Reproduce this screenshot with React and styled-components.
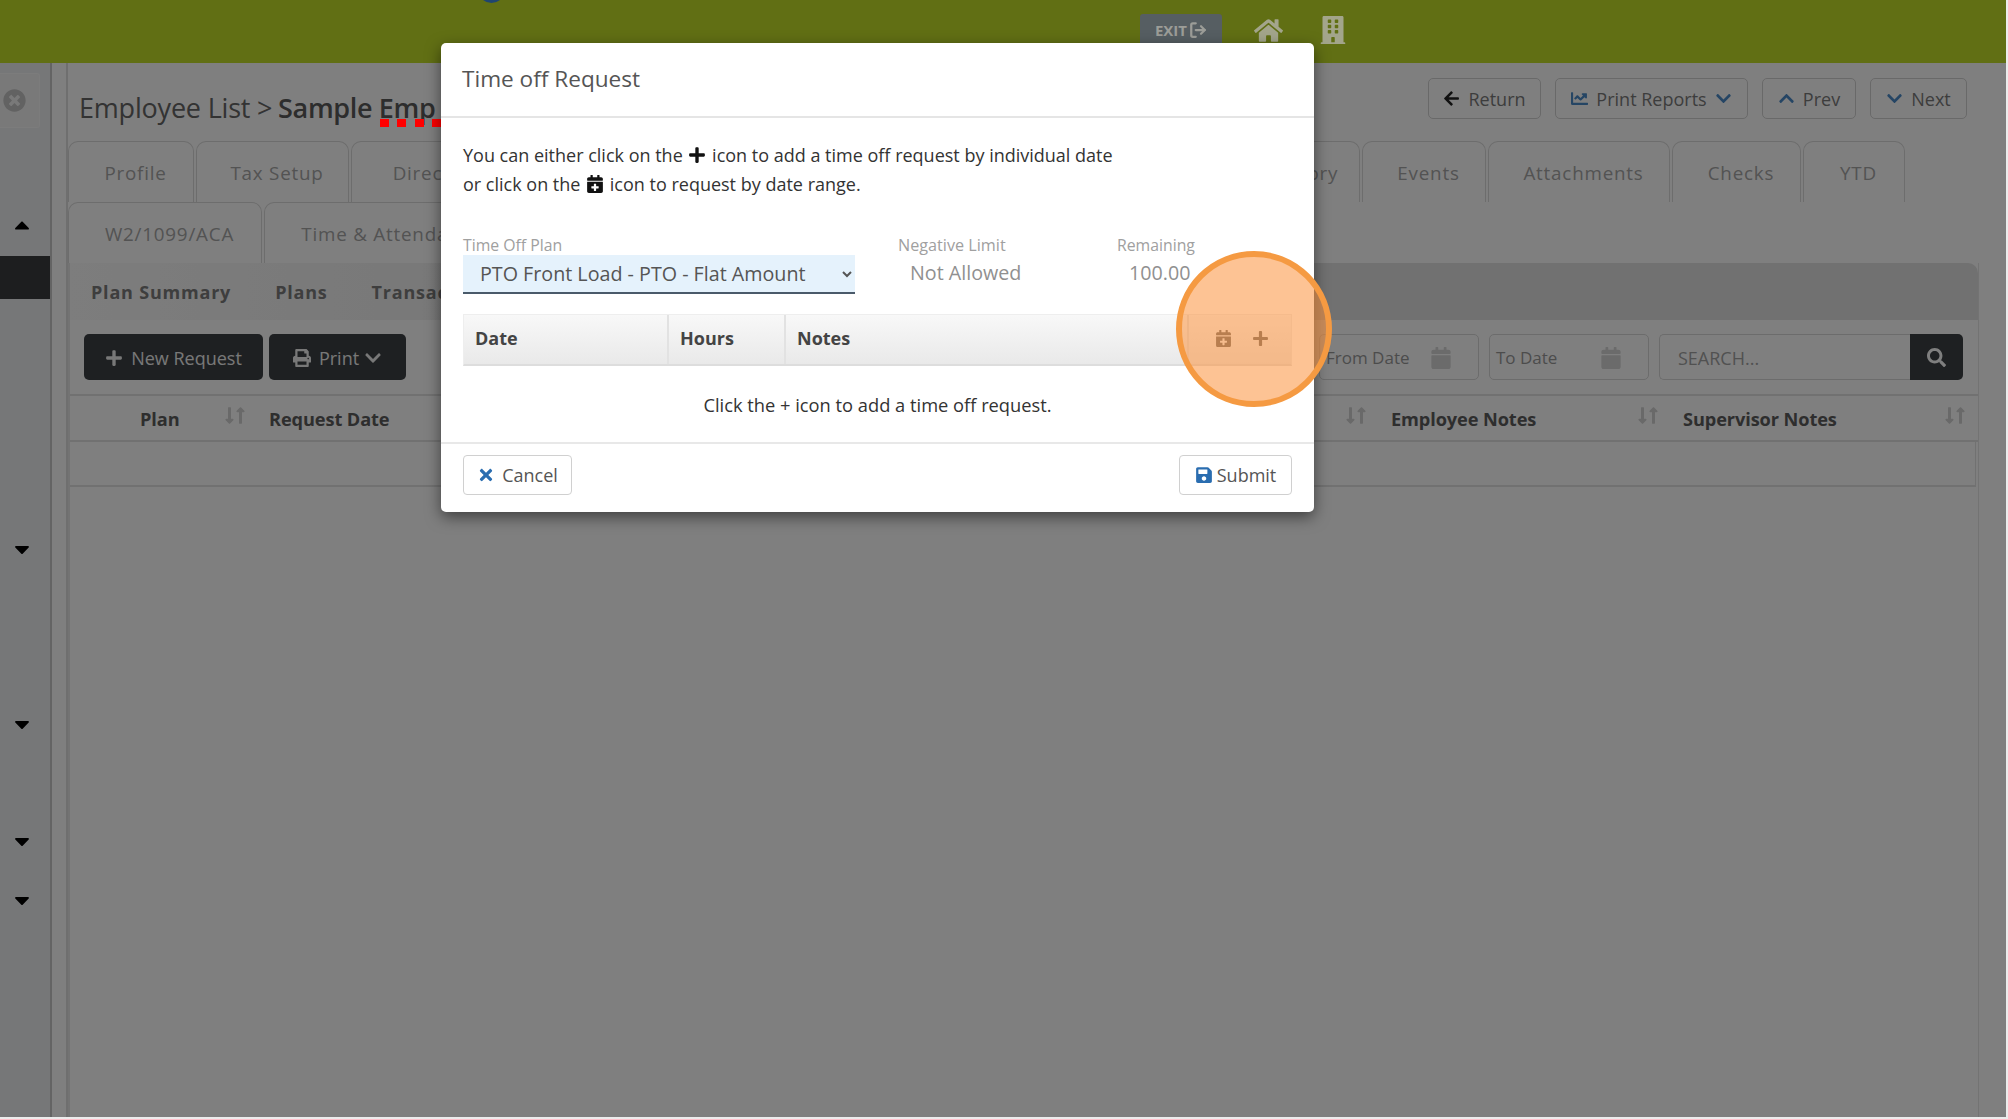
import React from "react";
import styled, { createGlobalStyle } from "styled-components";
import {
  FaArrowLeft, FaChartLine, FaChevronDown, FaChevronUp, FaPrint, FaPlus, FaSearch, FaCalendar,
  FaCalendarPlus, FaTimes, FaSave, FaHome, FaBuilding, FaTimesCircle, FaCaretUp,
  FaCaretDown, FaLongArrowAltDown, FaLongArrowAltUp,
} from "react-icons/fa";
import { LogOut } from "lucide-react";

const Global = createGlobalStyle`
  html, body { margin: 0; padding: 0; height: 100%; overflow: hidden; background: #ececec; }
  * { box-sizing: border-box; }
  body { font-family: "Open Sans", "Liberation Sans", sans-serif; }
`;

const Page = styled.div`
  position: relative; width: 2006px; height: 1117px; background: #fff; display: flex; flex-direction: column; overflow: hidden;
`;
const TopBar = styled.header`
  height: 63px; flex: none; background: #c2de28; display: flex; align-items: center; padding-left: 1140px;
`;
const Avatar = styled.span`
  position: absolute; left: 478px; top: -24px; width: 27px; height: 27px; border-radius: 50%; background: #3f8be0;
`;
const ExitButton = styled.div`
  position: relative; z-index: 1; width: 82px; height: 32px; margin-top: -4px; background: #565e62; border-radius: 3px; display: flex; align-items: center; justify-content: center; gap: 2px;
  color: #9c9d98; font-weight: 700; font-size: 15px;
`;
const TopIcon = styled.span`
  position: relative; z-index: 1; color: #a3a58b; display: flex; margin-left: ${p => p.$ml}px; margin-top: -3px; font-size: ${p => p.$size}px;
`;
const Body = styled.div`
  flex: 1; display: flex; min-height: 0;
`;
const Sidebar = styled.aside`
  width: 52px; flex: none; background: #eceef1; border-right: 2px solid #c9c9c9; position: relative;
`;
const CloseBox = styled.div`
  position: absolute; left: 0; top: 10px; width: 40px; height: 55px; border: 1px solid #f8f8f8; border-left: 0; border-radius: 0 3px 3px 0; display: flex; align-items: center; padding-left: 3px;
  color: #c4c4c4; font-size: 23px; background: #f2f2f2;
`;
const SideCaret = styled.span`
  position: absolute; left: 10px; top: ${p => p.$y - 63 - 12}px; font-size: 24px; line-height: 24px; height: 24px; display: flex; color: #000;
`;
const ActiveRow = styled.div`
  position: absolute; left: 0; top: 193px; width: 50px; height: 43px; background: #3a3c3f;
`;
const Strip = styled.div`
  width: 16px; flex: none; background: #fff; border-right: 2px solid #dedede;
`;
const Main = styled.main`
  flex: 1; min-width: 0; display: flex; flex-direction: column; padding-right: 27px;
`;
const TitleRow = styled.div`
  height: 78px; flex: none; display: flex; justify-content: space-between; padding: 0 12px 0 11px;
`;
const Title = styled.h1`
  margin: 26px 0 0; font-size: 27px; line-height: 37px; height: 37px; font-weight: 400; color: #666; letter-spacing: -0.2px; white-space: nowrap;
  b { font-weight: 600; color: #5a5a5a; letter-spacing: -.35px; margin-left: -1px; }
`;
const ActionGroup = styled.div`
  display: flex; gap: 14px; margin-top: 15px; height: 41px;
`;
const GhostButton = styled.div`
  height: 41px; width: ${p => p.$w}px; border: 1px solid #d2d2d2; border-radius: 5px; display: flex; align-items: center; justify-content: center; gap: 8px;
  font-size: 18px; color: #7a7a7a; background: #fff;
  svg { color: ${p => p.$ic || "#4a8ac8"}; font-size: 17px; }
`;
const TabRow = styled.div`
  display: flex; gap: 2px; height: 61px; flex: none;
`;
const Tab = styled.div`
  width: ${p => p.$w}px; flex: none; display: flex; align-items: center; justify-content: center; border: 1px solid #dadada; border-bottom: 0; border-radius: 10px 10px 0 0;
  font-size: 18.8px; letter-spacing: .8px; color: #a6a6a6; font-weight: 500; white-space: nowrap; background: #fff; padding: 1px 0 0 9px;
`;
const Panel = styled.section`
  flex: 1; display: flex; flex-direction: column; border-left: 2px solid #e6e6e6; border-right: 1px solid #e6e6e6; min-height: 0;
`;
const SubBand = styled.div`
  height: 57px; flex: none; background: linear-gradient(90deg, #fafafa, #e2e2e2 55%); border-radius: 0 10px 0 0; display: flex; align-items: center; padding-left: 21px; gap: 44px;
`;
const SubTab = styled.div`
  font-size: 18px; font-weight: 700; letter-spacing: .8px; color: #7c7c7c;
`;
const Toolbar = styled.div`
  height: 76px; flex: none; display: flex; align-items: center; padding: 0 15px 0 14px; border-bottom: 2px solid #e2e2e2;
`;
const DarkButton = styled.div`
  height: 46px; width: ${p => p.$w}px; margin-left: ${p => p.$ml || 0}px; background: #3c4044; border-radius: 5px; color: #f0f0f0; display: flex; align-items: center; justify-content: center; gap: 8px; font-size: 18px; padding-top: 1px;
  svg { font-size: 18px; flex: none; }
`;
const Chevron = styled(FaChevronDown)`
  margin-left: -3px;
`;
const Spacer = styled.div`
  flex: 1;
`;
const DateField = styled.div`
  width: ${p => p.$w}px; height: 46px; margin-left: 10px; border: 1px solid #d8d8d8; border-radius: 5px; background: #fff; display: flex; align-items: center; justify-content: space-between;
  padding: 1px 26px 0 6px; font-size: 17px; color: #999;
  svg { font-size: 22px; color: #d6d6d6; }
`;
const SearchField = styled.div`
  width: 251px; height: 46px; margin-left: 10px; border: 1px solid #d8d8d8; border-right: 0; border-radius: 5px 0 0 5px; background: #fff; display: flex; align-items: center; padding: 1px 0 0 18px; font-size: 18px; color: #a3a3a3;
`;
const SearchButton = styled.div`
  width: 53px; height: 46px; background: #3c4044; border-radius: 0 5px 5px 0; color: #fff; display: flex; align-items: center; justify-content: center; font-size: 19px;
`;
const HeadRow = styled.div`
  height: 46px; flex: none; position: relative; border-bottom: 2px solid #e2e2e2;
`;
const Head = styled.span`
  position: absolute; left: ${p => p.$x - 71}px; top: 11px; font-size: 18.2px; font-weight: 700; color: #5c5c5c; white-space: nowrap; letter-spacing: -.1px;
`;
const SortMark = styled.span`
  position: absolute; left: ${p => p.$x - 71}px; top: 10px; color: #d2d2d2; font-size: 19px; display: flex;
  svg { margin-right: -8px; }
`;
const EmptyRow = styled.div`
  height: 45px; flex: none; border-bottom: 2px solid #e2e2e2; margin-right: 2px; border-right: 1px solid #e2e2e2;
`;
const Overlay = styled.div`
  position: absolute; inset: 0; background: rgba(0,0,0,.5);
`;
const RedDots = styled.span`
  position: absolute; left: 380px; top: 119px; width: 61px; height: 8px;
  background: repeating-linear-gradient(90deg, #f00 0 9px, transparent 9px 17.5px);
`;
const Modal = styled.div`
  position: absolute; z-index: 2; left: 441px; top: 43px; width: 873px; height: 469px; background: #fff; border-radius: 5px; box-shadow: 0 5px 15px rgba(0,0,0,.5); display: flex; flex-direction: column;
`;
const ModalHead = styled.div`
  height: 75px; flex: none; display: flex; align-items: center; padding: 0 21px 2px; border-bottom: 2px solid #e5e5e5; font-size: 22.6px; font-weight: 500; color: #555;
`;
const ModalBody = styled.div`
  flex: 1; padding: 23px 22px 0; min-height: 0;
`;
const Intro = styled.p`
  margin: 0; font-size: 18px; line-height: 29px; color: #333; letter-spacing: 0;
  svg { vertical-align: -2px; font-size: 18px; color: #111; margin: 0 1px; }
`;
const FieldRow = styled.div`
  display: flex; margin-top: 36px; height: 59px;
`;
const Field = styled.div`
  width: ${p => p.$w}px; margin-left: ${p => p.$ml || 0}px; display: flex; flex-direction: column;
`;
const Label = styled.label`
  font-size: ${p => p.$size || 15.8}px; line-height: 21px; color: #a0a0a0; height: 20px; display: block; white-space: nowrap;
`;
const Plan = styled.select`
  width: 392px; height: 39px; border: 0; border-bottom: 2px solid #4a5a6a; background: #e5f2fc; color: #555; padding: 0 8px 0 13px; font: 19.7px "Open Sans", sans-serif; outline: none;
`;
const Value = styled.div`
  font-size: 19.7px; line-height: 36px; padding-left: 12px; color: #909090;
`;
const ReqHead = styled.div`
  margin-top: 20px; height: 52px; border: 1px solid #eee; border-bottom: 2px solid #ddd; background: linear-gradient(#f8f8f8, #e9e9e9); display: flex;
`;
const ReqCol = styled.div`
  width: ${p => p.$w}px; flex: ${p => (p.$w ? "none" : 1)}; border-right: 2px solid #e2e2e2; display: flex; align-items: center; padding: 0 0 4px 11px; font-size: 18px; font-weight: 700; color: #444;
`;
const ReqTools = styled.div`
  width: 102px; flex: none; display: flex; align-items: center; justify-content: center; gap: 20px; color: #666; font-size: 17px; padding: 0 0 3px 4px;
`;
const EmptyMsg = styled.div`
  height: 76px; display: flex; align-items: center; justify-content: center; font-size: 18.3px; color: #333;
`;
const ModalFoot = styled.div`
  height: 70px; flex: none; border-top: 2px solid #e8e8e8; display: flex; align-items: center; justify-content: space-between; padding: 0 22px 6px;
`;
const FootButton = styled.div`
  height: 40px; width: ${p => p.$w}px; border: 1px solid #d0d0d0; border-radius: 4px; background: #fff; display: flex; align-items: center; justify-content: center; gap: ${p => p.$gap}px; font-size: 18px; color: #555;
  svg { color: #2a6db0; font-size: 18px; }
`;
const Spot = styled.div`
  position: absolute; z-index: 3; left: 1176px; top: 251px; width: 156px; height: 156px; border-radius: 50%; border: 6px solid #f59a42; background: rgba(251,146,60,.55); pointer-events: none;
`;

const Sort = ({ x }) => (
  <SortMark $x={x}><FaLongArrowAltDown /><FaLongArrowAltUp /></SortMark>
);

export default function App() {
  return (
    <>
      <Global />
      <Page>
        <TopBar>
          <Avatar />
          <ExitButton>EXIT<LogOut size={18} strokeWidth={3} /></ExitButton>
          <TopIcon $ml={32} $size={29}><FaHome /></TopIcon>
          <TopIcon $ml={36} $size={28}><FaBuilding /></TopIcon>
        </TopBar>
        <Body>
          <Sidebar>
            <CloseBox><FaTimesCircle /></CloseBox>
            <SideCaret $y={225}><FaCaretUp /></SideCaret>
            <ActiveRow />
            <SideCaret $y={549}><FaCaretDown /></SideCaret>
            <SideCaret $y={724}><FaCaretDown /></SideCaret>
            <SideCaret $y={841}><FaCaretDown /></SideCaret>
            <SideCaret $y={900}><FaCaretDown /></SideCaret>
          </Sidebar>
          <Strip />
          <Main>
            <TitleRow>
              <Title>Employee List &gt; <b>Sample Emp</b></Title>
              <ActionGroup>
                <GhostButton $w={113} $ic="#222"><FaArrowLeft />Return</GhostButton>
                <GhostButton $w={193}><FaChartLine />Print Reports<FaChevronDown /></GhostButton>
                <GhostButton $w={94}><FaChevronUp />Prev</GhostButton>
                <GhostButton $w={97}><FaChevronDown />Next</GhostButton>
              </ActionGroup>
            </TitleRow>
            <TabRow>
              <Tab $w={126}>Profile</Tab>
              <Tab $w={153}>Tax Setup</Tab>
              <Tab $w={210}>Direct Deposit</Tab>
              <Tab $w={317}>Pay Setup</Tab>
              <Tab $w={316}>Deductions</Tab>
              <Tab $w={160}>Pay History</Tab>
              <Tab $w={124}>Events</Tab>
              <Tab $w={182}>Attachments</Tab>
              <Tab $w={129}>Checks</Tab>
              <Tab $w={102}>YTD</Tab>
            </TabRow>
            <TabRow>
              <Tab $w={194}>W2/1099/ACA</Tab>
              <Tab $w={246}>Time &amp; Attendance</Tab>
            </TabRow>
            <Panel>
              <SubBand>
                <SubTab>Plan Summary</SubTab>
                <SubTab>Plans</SubTab>
                <SubTab>Transactions</SubTab>
              </SubBand>
              <Toolbar>
                <DarkButton $w={179}><FaPlus />New Request</DarkButton>
                <DarkButton $w={137} $ml={6}><FaPrint />Print<Chevron /></DarkButton>
                <Spacer />
                <DateField $w={160}>From Date<FaCalendar /></DateField>
                <DateField $w={160}>To Date<FaCalendar /></DateField>
                <SearchField>SEARCH...</SearchField>
                <SearchButton><FaSearch /></SearchButton>
              </Toolbar>
              <HeadRow>
                <Head $x={141}>Plan</Head>
                <Sort x={221} />
                <Head $x={270}>Request Date</Head>
                <Sort x={1342} />
                <Head $x={1392}>Employee Notes</Head>
                <Sort x={1634} />
                <Head $x={1684}>Supervisor Notes</Head>
                <Sort x={1941} />
              </HeadRow>
              <EmptyRow />
            </Panel>
          </Main>
        </Body>
        <Overlay />
        <RedDots />
        <Modal>
          <ModalHead>Time off Request</ModalHead>
          <ModalBody>
            <Intro>
              You can either click on the <FaPlus /> icon to add a time off request by individual date<br />
              or click on the <FaCalendarPlus /> icon to request by date range.
            </Intro>
            <FieldRow>
              <Field $w={392}>
                <Label>Time Off Plan</Label>
                <Plan defaultValue="pto"><option value="pto">PTO Front Load - PTO - Flat Amount</option></Plan>
              </Field>
              <Field $w={180} $ml={43}>
                <Label $size={16.2}>Negative Limit</Label>
                <Value>Not Allowed</Value>
              </Field>
              <Field $w={140} $ml={39}>
                <Label>Remaining</Label>
                <Value>100.00</Value>
              </Field>
            </FieldRow>
            <ReqHead>
              <ReqCol $w={205}>Date</ReqCol>
              <ReqCol $w={117}>Hours</ReqCol>
              <ReqCol>Notes</ReqCol>
              <ReqTools><FaCalendarPlus /><FaPlus /></ReqTools>
            </ReqHead>
            <EmptyMsg>Click the + icon to add a time off request.</EmptyMsg>
          </ModalBody>
          <ModalFoot>
            <FootButton $w={109} $gap={7}><FaTimes />Cancel</FootButton>
            <FootButton $w={113} $gap={4}><FaSave />Submit</FootButton>
          </ModalFoot>
        </Modal>
        <Spot />
      </Page>
    </>
  );
}
